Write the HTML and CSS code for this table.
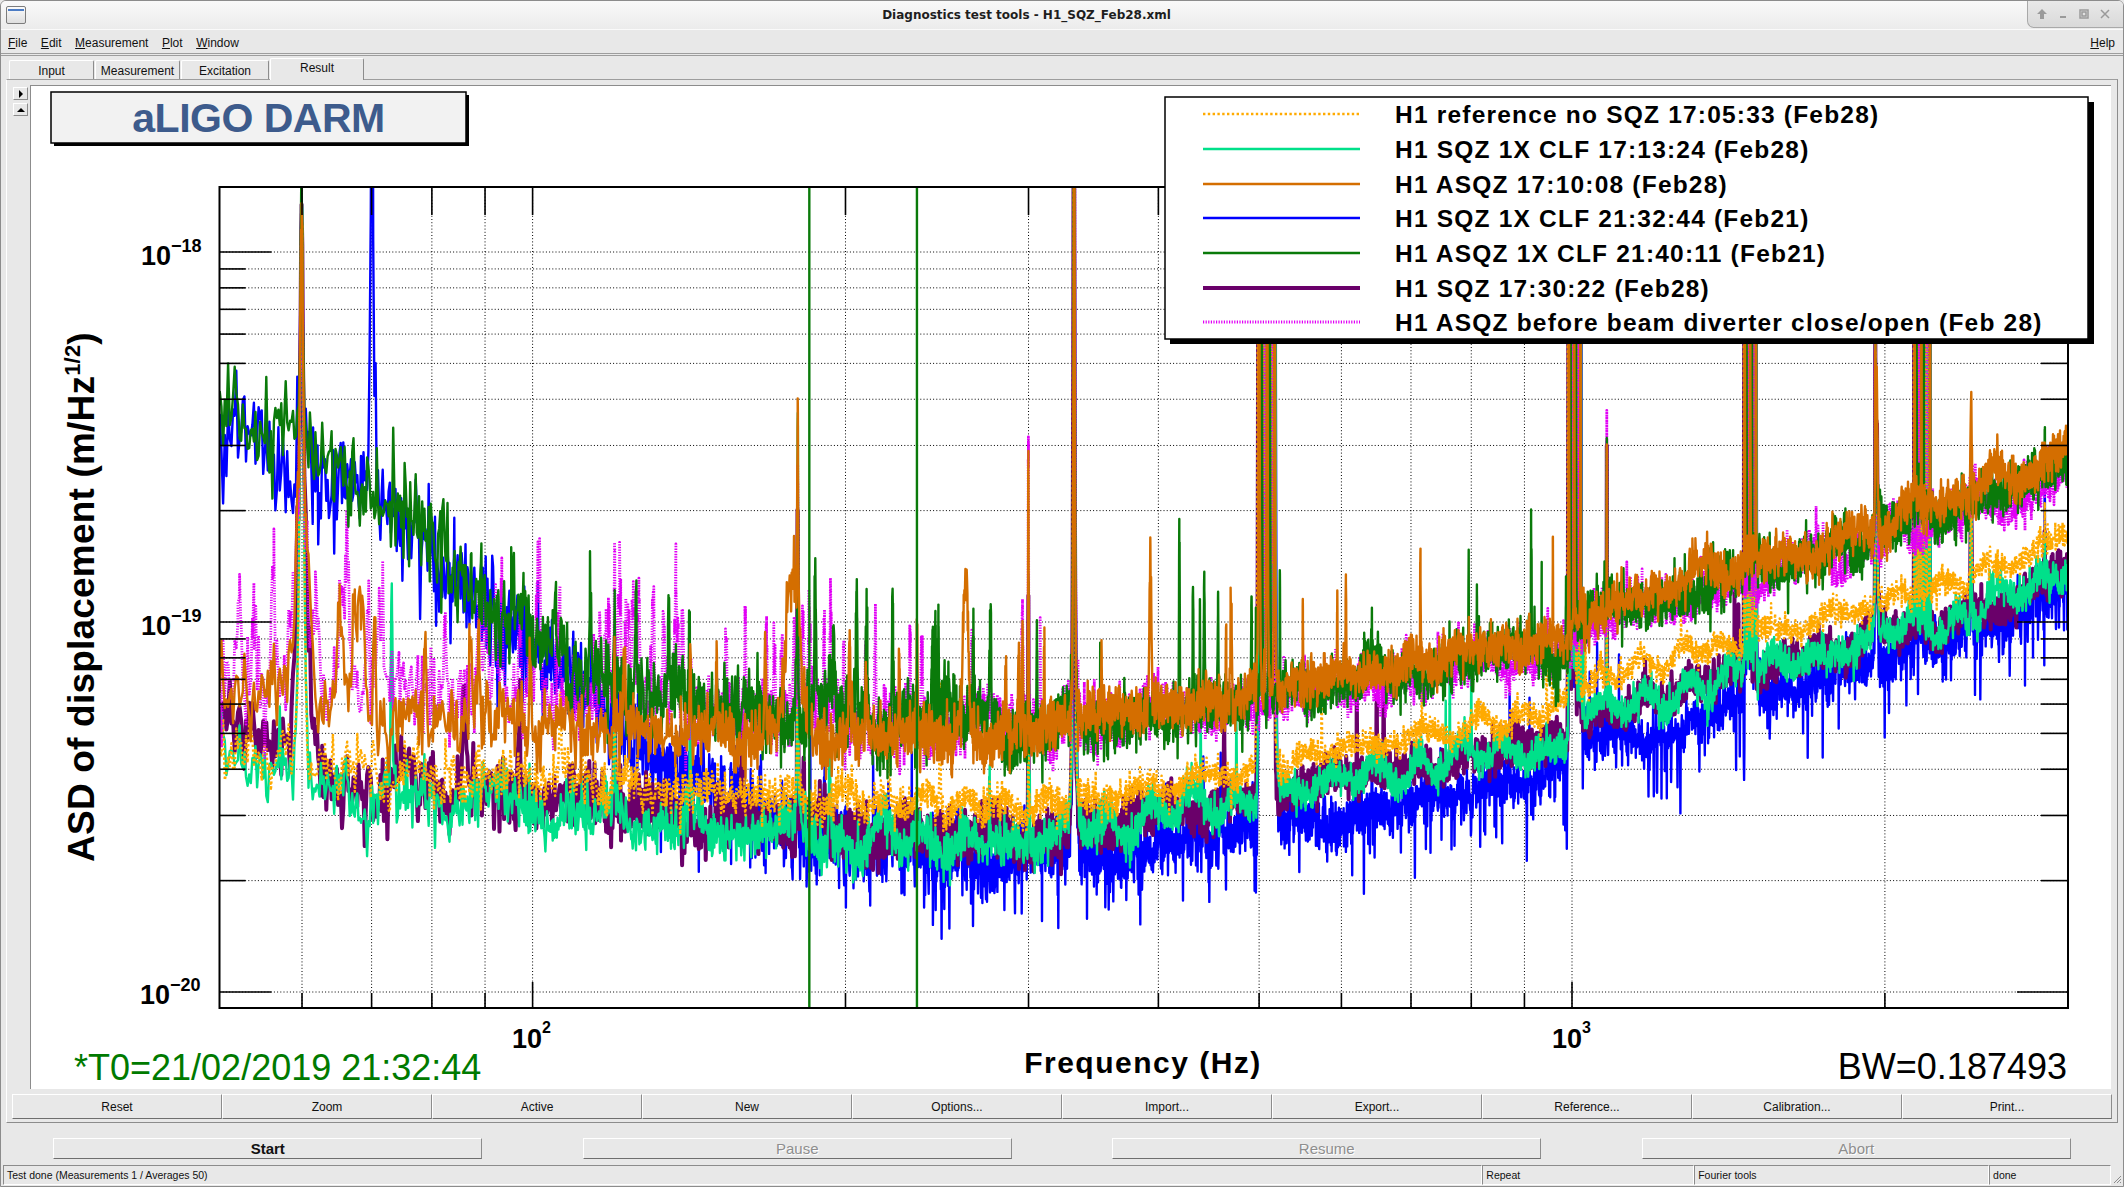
FILE: index.html
```html
<!DOCTYPE html>
<html>
<head>
<meta charset="utf-8">
<title>Diagnostics test tools - H1_SQZ_Feb28.xml</title>
<link rel="stylesheet" href="styles.css">
</head>
<body>
<div class="window">
  <div class="titlebar">
    <div class="winicon"><span class="winicon-stripe"></span></div>
    <div class="title">Diagnostics test tools - H1_SQZ_Feb28.xml</div>
    <div class="winctl">
      <svg width="12" height="12" viewBox="0 0 12 12"><polygon class="wc-fill" points="6,1 11,6 8,6 8,11 4,11 4,6 1,6"/></svg>
      <svg width="12" height="12" viewBox="0 0 12 12"><rect class="wc-fill" x="3" y="8" width="6" height="2"/></svg>
      <svg width="12" height="12" viewBox="0 0 12 12"><rect class="wc-line" x="2" y="2" width="8" height="8"/><rect class="wc-line" x="4" y="4" width="4" height="4"/></svg>
      <svg width="12" height="12" viewBox="0 0 12 12"><path class="wc-line" d="M2 2 L10 10 M10 2 L2 10"/></svg>
    </div>
  </div>
  <div class="menubar">
    <span class="menu"><u>F</u>ile</span>
    <span class="menu"><u>E</u>dit</span>
    <span class="menu"><u>M</u>easurement</span>
    <span class="menu"><u>P</u>lot</span>
    <span class="menu"><u>W</u>indow</span>
    <span class="spacer"></span>
    <span class="menu"><u>H</u>elp</span>
  </div>
  <div class="tabbar">
    <div class="tab tab-input">Input</div>
    <div class="tab tab-meas">Measurement</div>
    <div class="tab tab-exc">Excitation</div>
    <div class="tab tab-res">Result</div>
  </div>
  <div class="tabpanel">
    <div class="panel-row">
      <div class="side">
        <div class="arrowbtn"><svg width="6" height="8" viewBox="0 0 6 8"><polygon class="ab" points="1,0 5,4 1,8"/></svg></div>
        <div class="arrowbtn"><svg width="8" height="6" viewBox="0 0 8 6"><polygon class="ab" points="0,5 4,1 8,5"/></svg></div>
      </div>
      <div class="canvas">
        <svg class="plot" width="2080" height="1003" viewBox="31 86 2080 1003" xmlns="http://www.w3.org/2000/svg">
          <defs>
            <clipPath id="fclip"><rect x="219.5" y="187" width="1848.5" height="821"/></clipPath>
          </defs>
          <g id="grid" class="grid"></g>
          <g id="traces" clip-path="url(#fclip)"></g>
          <g id="axes" class="axes"></g>
          <rect class="frame" x="219.5" y="187" width="1848.5" height="821"/>

          <rect class="shadow" x="54" y="95" width="415" height="51"/>
          <rect class="titlebox" x="51" y="92" width="415" height="51"/>
          <text class="ptitle" x="258.5" y="132" text-anchor="middle">aLIGO DARM</text>

          <text class="tick" x="141" y="265">10<tspan class="exp" dy="-13">−18</tspan></text>
          <text class="tick" x="141" y="635">10<tspan class="exp" dy="-13">−19</tspan></text>
          <text class="tick" x="140" y="1004">10<tspan class="exp" dy="-13">−20</tspan></text>
          <text class="tick" x="512" y="1048">10<tspan class="exp2" dy="-15">2</tspan></text>
          <text class="tick" x="1552" y="1048">10<tspan class="exp2" dy="-15">3</tspan></text>

          <text class="xtitle" x="1143" y="1073" text-anchor="middle">Frequency (Hz)</text>
          <text class="ytitle" transform="translate(94 597) rotate(-90)" text-anchor="middle">ASD of displacement (m/Hz<tspan class="ysup" dy="-14">1/2</tspan><tspan dy="14">)</tspan></text>
          <text class="t0" x="74" y="1080">*T0=21/02/2019 21:32:44</text>
          <text class="bw" x="2067" y="1079" text-anchor="end">BW=0.187493</text>

          <rect class="shadow" x="1170" y="102" width="924" height="242"/>
          <rect class="legbox" x="1165" y="97" width="923" height="242"/>
          <line class="tr tr-yellow" x1="1203" x2="1360" y1="114" y2="114"/>
          <text class="legtext" x="1395" y="122.5">H1 reference no SQZ 17:05:33 (Feb28)</text>
          <line class="tr tr-teal" x1="1203" x2="1360" y1="149" y2="149"/>
          <text class="legtext" x="1395" y="157.5">H1 SQZ 1X CLF 17:13:24 (Feb28)</text>
          <line class="tr tr-orange" x1="1203" x2="1360" y1="184" y2="184"/>
          <text class="legtext" x="1395" y="192.5">H1 ASQZ 17:10:08 (Feb28)</text>
          <line class="tr tr-blue" x1="1203" x2="1360" y1="218" y2="218"/>
          <text class="legtext" x="1395" y="226.5">H1 SQZ 1X CLF 21:32:44 (Feb21)</text>
          <line class="tr tr-green" x1="1203" x2="1360" y1="253" y2="253"/>
          <text class="legtext" x="1395" y="261.5">H1 ASQZ 1X CLF 21:40:11 (Feb21)</text>
          <line class="tr tr-purple" x1="1203" x2="1360" y1="288" y2="288"/>
          <text class="legtext" x="1395" y="296.5">H1 SQZ 17:30:22 (Feb28)</text>
          <line class="tr tr-magenta" x1="1203" x2="1360" y1="322" y2="322"/>
          <text class="legtext" x="1395" y="330.5">H1 ASQZ before beam diverter close/open (Feb 28)</text>
        </svg>
      </div>
    </div>
    <div class="btnrow">
      <div class="btn">Reset</div>
      <div class="btn">Zoom</div>
      <div class="btn">Active</div>
      <div class="btn">New</div>
      <div class="btn">Options...</div>
      <div class="btn">Import...</div>
      <div class="btn">Export...</div>
      <div class="btn">Reference...</div>
      <div class="btn">Calibration...</div>
      <div class="btn">Print...</div>
    </div>
  </div>
  <div class="ctrlrow">
    <div class="cbtn start">Start</div>
    <div class="cbtn off">Pause</div>
    <div class="cbtn off">Resume</div>
    <div class="cbtn off">Abort</div>
  </div>
  <div class="statusbar">
    <div class="sf sf1">Test done (Measurements 1 / Averages 50)</div>
    <div class="sf sf2">Repeat</div>
    <div class="sf sf3">Fourier tools</div>
    <div class="sf sf4">done</div>
    <div class="grip"><svg width="11" height="11" viewBox="0 0 11 11"><path class="gr" d="M10 3 L3 10 M10 6 L6 10 M10 9 L9 10"/></svg></div>
  </div>
</div>
<script src="script.js"></script>
</body>
</html>
```

FILE: styles.css
```css
* { box-sizing: border-box; }
html, body { margin: 0; padding: 0; }
body {
  width: 2124px; height: 1187px; overflow: hidden;
  background: #e8e8e8;
  font-family: "Liberation Sans", Arial, sans-serif;
  color: #111;
}
.window {
  width: 2124px; height: 1187px;
  display: flex; flex-direction: column;
  border: 1px solid #8c8c8c;
  border-radius: 6px 6px 0 0;
  background: #e8e8e8;
  overflow: hidden;
}

/* title bar */
.titlebar {
  flex: none; height: 29px;
  display: flex; align-items: flex-start;
  background: linear-gradient(#f9f9f9, #ebebeb);
  border-bottom: 1px solid #fafafa;
}
.winicon {
  flex: none; width: 20px; height: 18px;
  margin: 5px 0 0 5px;
  border: 1px solid #7c7c7c; border-radius: 2px;
  background: linear-gradient(#fbfbfb, #dedede);
  padding: 2px 1px 0;
}
.winicon-stripe { display: block; height: 2px; background: #4c7cc4; }
.title {
  flex: 1; text-align: center;
  font: bold 12px "DejaVu Sans", sans-serif;
  color: #1e1e1e; line-height: 29px;
}
.winctl {
  flex: none; width: 96px; height: 27px;
  display: flex; align-items: center; gap: 9px;
  padding-left: 8px;
  background: linear-gradient(#e9e9e9, #d9d9d9);
  border-left: 1px solid #a9a9a9; border-bottom: 1px solid #a9a9a9;
  border-bottom-left-radius: 7px;
}
.winctl svg { display: block; }
.wc-fill { fill: #9a9a9a; }
.wc-line { fill: none; stroke: #9a9a9a; stroke-width: 1.5; }

/* menu */
.menubar {
  flex: none; height: 24px;
  display: flex; align-items: center;
  padding: 2px 8px 0 7px;
  font-size: 12px;
  border-bottom: 1px solid #9d9d9d;
}
.menu { margin-right: 13.5px; }
.menu:last-child { margin-right: 0; }
.menu u { text-decoration: underline; text-underline-offset: 1px; }
.spacer { flex: 1; }

/* tabs */
.tabbar {
  flex: none; height: 24px; margin-top: 1px;
  border-top: 1px solid #9d9d9d;
  display: flex; align-items: flex-end;
  padding-left: 8px;
}
.tab {
  height: 19px; margin-right: 1px;
  display: flex; align-items: center; justify-content: center;
  padding-top: 2px;
  font-size: 12px;
  background: #e8e8e8;
  border-top: 1px solid #fff; border-left: 1px solid #fff;
  border-right: 1px solid #8c8c8c;
  border-radius: 2px 2px 0 0;
}
.tab-input { width: 85px; }
.tab-meas { width: 85px; }
.tab-exc { width: 88px; }
.tab-res {
  width: 94px; height: 22px; margin-bottom: -1px;
  position: relative; padding-top: 0; padding-bottom: 3px;
}

/* tab panel */
.tabpanel {
  flex: none; height: 1044px;
  margin: 0 5px;
  border-top: 1px solid #9d9d9d;
  border-left: 1px solid #fff;
  border-right: 1px solid #8c8c8c;
  border-bottom: 1px solid #8c8c8c;
  display: flex; flex-direction: column;
}
.panel-row { display: flex; padding-top: 5px; }
.side {
  width: 23px; flex: none;
  padding: 2px 0 0 6px;
  display: flex; flex-direction: column; gap: 3px;
}
.arrowbtn {
  width: 15px; height: 13px;
  border: 1px solid; border-color: #fff #8c8c8c #8c8c8c #fff;
  background: #e8e8e8;
  display: flex; align-items: center; justify-content: center;
}
.arrowbtn svg { display: block; }
.ab { fill: #000; }
.canvas {
  flex: none; width: 2081px; height: 1004px;
  border-top: 1px solid #8c8c8c; border-left: 1px solid #8c8c8c;
  background: #fff;
}
.canvas svg { display: block; }
.btnrow { display: flex; margin: 5px 0 0 5px; height: 25px; }
.btn {
  width: 210px; flex: none;
  display: flex; align-items: center; justify-content: center;
  font-size: 12px;
  background: #e8e8e8;
  border: 1px solid; border-color: #fff #8c8c8c #6e6e6e #fff;
}

/* control buttons */
.ctrlrow {
  flex: none; height: 41px;
  display: grid; grid-template-columns: repeat(4, 1fr);
  padding: 15px 2px 5px;
}
.cbtn {
  justify-self: center; width: 429px; height: 21px;
  display: flex; align-items: center; justify-content: center;
  font-size: 15px;
  background: #e8e8e8;
  border: 1px solid; border-color: #fff #8c8c8c #6e6e6e #fff;
}
.cbtn.start { font-weight: bold; color: #111; }
.cbtn.off { color: #8e8e8e; text-shadow: 1px 1px 0 #fff; }

/* status bar */
.statusbar {
  flex: none; height: 22px;
  display: flex; padding: 1px 0 1px 2px;
  font-size: 10.5px;
}
.sf {
  height: 20px; display: flex; align-items: center;
  padding-left: 3px;
  border: 1px solid; border-color: #8c8c8c #fff #fff #8c8c8c;
  white-space: nowrap;
}
.sf1 { width: 1480px; }
.sf2 { width: 212px; }
.sf3 { width: 295px; }
.sf4 { width: 122px; }
.grip { flex: 1; display: flex; align-items: flex-end; justify-content: flex-end; padding: 0 1px 1px 0; }
.grip svg { display: block; }
.gr { fill: none; stroke: #8c8c8c; stroke-width: 1; }

/* plot */
.grid line { stroke: #000; stroke-width: 1; stroke-dasharray: 1 2.2; }
.axes line { stroke: #000; stroke-width: 1.6; }
.frame { fill: none; stroke: #000; stroke-width: 2; }
.shadow { fill: #000; }
.titlebox { fill: #f2f2f2; stroke: #000; stroke-width: 1.5; }
.legbox { fill: #fff; stroke: #000; stroke-width: 1.5; }
.ptitle { font: bold 41px "Liberation Sans", Arial, sans-serif; fill: #3d5b8c; letter-spacing: -0.5px; }
.tick { font: bold 27px "Liberation Sans", Arial, sans-serif; fill: #000; }
.exp { font-size: 18px; }
.exp2 { font-size: 16px; }
.xtitle { font: bold 30px "Liberation Sans", Arial, sans-serif; fill: #000; letter-spacing: 1.5px; }
.ytitle { font: bold 37px "Liberation Sans", Arial, sans-serif; fill: #000; letter-spacing: 0.2px; }
.ysup { font-size: 22px; }
.t0 { font: 36px "Liberation Sans", Arial, sans-serif; fill: #007a00; }
.bw { font: 36px "Liberation Sans", Arial, sans-serif; fill: #000; }
.legtext { font: bold 24.5px "Liberation Sans", Arial, sans-serif; fill: #000; letter-spacing: 1.2px; }

.tr { fill: none; stroke-linejoin: round; }
.tr-blue { stroke: #0000ff; stroke-width: 2.4; }
.tr-purple { stroke: #6a006a; stroke-width: 4; }
.tr-teal { stroke: #00e08a; stroke-width: 2.4; }
.tr-yellow { stroke: #ffaa00; stroke-width: 2.4; stroke-dasharray: 2.4 2.4; }
.tr-green { stroke: #0a7a0a; stroke-width: 2.4; }
.tr-orange { stroke: #d46e00; stroke-width: 2.4; }
.tr-magenta { stroke: #e100f5; stroke-width: 2.8; stroke-dasharray: 1.2 1.4; }
```

FILE: script.js
```js
(function () {
  var NS = 'http://www.w3.org/2000/svg';
  var X0 = 219.5, X1 = 2068, Y0 = 187, Y1 = 1008;
  function lg(v) { return Math.log(v) / Math.LN10; }
  function fx(f) { return 532.6 + 1039.4 * lg(f / 100); }
  function ly(L) { return 252 + 370 * (-18 - L); }
  function el(tag, attrs, parent) {
    var e = document.createElementNS(NS, tag);
    for (var k in attrs) e.setAttribute(k, attrs[k]);
    parent.appendChild(e);
    return e;
  }
  var grid = document.getElementById('grid');
  var axes = document.getElementById('axes');
  var layer = document.getElementById('traces');

  [-20, -19, -18].forEach(function (d) {
    for (var m = 1; m <= 9; m++) {
      var y = ly(d + lg(m));
      if (y < Y0 + 1 || y > Y1 - 1) continue;
      var major = m === 1;
      el('line', { x1: X0, x2: X1, y1: y, y2: y }, grid);
      el('line', { x1: X0, x2: X0 + (major ? 52 : 26), y1: y, y2: y }, axes);
      el('line', { x1: X1, x2: X1 - (major ? 51 : 27), y1: y, y2: y }, axes);
    }
  });
  [60, 70, 80, 90, 100, 200, 300, 400, 500, 600, 700, 800, 900, 1000, 2000].forEach(function (f) {
    var x = fx(f), major = (f === 100 || f === 1000);
    el('line', { x1: x, x2: x, y1: Y0, y2: Y1 }, grid);
    el('line', { x1: x, x2: x, y1: Y1, y2: Y1 - (major ? 26 : 15) }, axes);
    el('line', { x1: x, x2: x, y1: Y0, y2: Y0 + 28 }, axes);
  });

  var seed = 20190228;
  function rnd() { seed = (Math.imul(seed, 1664525) + 1013904223) >>> 0; return seed / 4294967296; }
  function gauss() {
    var u = rnd(); if (u < 1e-9) u = 1e-9;
    var v = rnd();
    return Math.sqrt(-2 * Math.log(u)) * Math.cos(6.283185307 * v);
  }
  function interp(pts, f) {
    if (f <= pts[0][0]) return pts[0][1];
    var lf = lg(f);
    for (var i = 1; i < pts.length; i++) {
      if (f <= pts[i][0]) {
        var a = lg(pts[i - 1][0]), b = lg(pts[i][0]);
        return pts[i - 1][1] + (lf - a) / (b - a) * (pts[i][1] - pts[i - 1][1]);
      }
    }
    return pts[pts.length - 1][1];
  }
  function cluster(fs, h, w, off, pick) {
    var out = [];
    fs.forEach(function (f, i) { if (pick < 0 || i % 3 === pick) out.push([f + off, h, w]); });
    return out;
  }

  function commonLines(off, pick) {
    return [
      [59.95, -17.93, 0.12], [119.9, -19.12, 0.12], [179.9, -18.68, 0.12], [299.9, -18.95, 0.12],
      [331.9 + off * 0.3, -17.3, 0.15], [1080.2, -18.55, 0.2], [2850, -18.95, 0.8], [1963, -18.5, 3.5],
      [1958, -18.3, 0.4], [2421, -18.75, 3]
    ]
      .concat(cluster([500, 503, 506, 509, 512, 515, 517.5], -17.2, 0.15, off, pick))
      .concat(cluster([993, 997, 1001, 1005, 1009, 1014, 1019], -17.2, 0.15, off * 1.5, pick))
      .concat(cluster([1466, 1472, 1478, 1484, 1490, 1497, 1503], -17.2, 0.2, off * 2, pick))
      .concat(cluster([2136, 2146, 2156, 2168, 2180, 2195, 2210], -17.2, 0.2, off * 2.5, pick));
  }

  var traces = [
    {
      cls: 'tr-blue', off: 0.9, pick: -1, slo: 0.08, shi: 0.035, down: 0.06,
      wall: [[50, -18.47], [60, -18.56], [70, -18.66], [90, -18.95], [110, -19.17], [134, -19.45], [164, -19.65], [200, -19.85], [300, -20.3], [3000, -21.5]],
      floor: [[50, -19.75], [200, -19.67], [300, -19.65], [515, -19.56], [700, -19.48], [999, -19.40], [1001, -19.34], [1270, -19.27], [1741, -19.15], [2340, -19.04], [3000, -18.88]],
      extra: [[70.1, -17.3, 0.1], [1958, -17.95, 0.35], [2850, -18.7, 0.8], [2421, -18.72, 2]],
      nrand: 15, rlo: 60, rhi: 2500, ramp: [0.05, 0.12]
    },
    {
      cls: 'tr-purple', off: -0.6, pick: -1, slo: 0.05, shi: 0.025,
      floor: [[50, -19.30], [58, -19.30], [62, -19.42], [80, -19.45], [100, -19.47], [150, -19.54], [230, -19.57], [300, -19.58], [515, -19.47], [700, -19.39], [999, -19.32], [1001, -19.26], [1270, -19.19], [1741, -19.08], [2340, -18.99], [3000, -18.87]],
      extra: [[59.95, -18.7, 0.6]],
      nrand: 10, rlo: 60, rhi: 1500, ramp: [0.05, 0.12]
    },
    {
      cls: 'tr-teal', off: 0.45, pick: -1, slo: 0.045, shi: 0.022,
      floor: [[50, -19.35], [58, -19.37], [62, -19.46], [100, -19.50], [150, -19.56], [230, -19.59], [300, -19.59], [380, -19.53], [515, -19.47], [697, -19.39], [999, -19.33], [1001, -19.26], [1270, -19.19], [1741, -19.08], [2340, -18.99], [3000, -18.86]],
      extra: [[73.2, -19.02, 0.12], [179.9, -18.63, 0.12]],
      nrand: 12, rlo: 60, rhi: 1500, ramp: [0.05, 0.12]
    },
    {
      cls: 'tr-yellow', off: -1.1, pick: -1, slo: 0.04, shi: 0.018,
      floor: [[50, -19.35], [58, -19.36], [62, -19.40], [100, -19.42], [150, -19.46], [230, -19.49], [300, -19.50], [380, -19.46], [515, -19.38], [810, -19.28], [999, -19.23], [1001, -19.17], [1270, -19.09], [1863, -18.97], [2420, -18.88], [3000, -18.77]],
      extra: [],
      nrand: 10, rlo: 60, rhi: 1500, ramp: [0.04, 0.1]
    },
    {
      cls: 'tr-magenta', off: 0.7, pick: 2, slo: 0.06, shi: 0.025, up: 0.1,
      floor: [[50, -19.17], [100, -19.21], [200, -19.27], [300, -19.29], [515, -19.22], [999, -19.09], [1001, -19.03], [1741, -18.84], [3000, -18.62]],
      extra: [[299.9, -18.6, 0.15], [119.9, -18.94, 0.12], [59.95, -18.7, 0.6]],
      nrand: 60, rlo: 50, rhi: 320, ramp: [0.06, 0.14]
    },
    {
      cls: 'tr-green', off: -0.3, pick: 1, slo: 0.07, shi: 0.035,
      wall: [[50, -18.40], [58, -18.48], [67, -18.60], [82, -18.86], [100, -19.12], [121, -19.33], [150, -19.5], [200, -19.75], [300, -20.2], [3000, -21.5]],
      floor: [[50, -19.32], [150, -19.30], [250, -19.27], [300, -19.30], [400, -19.26], [515, -19.20], [700, -19.13], [944, -19.07], [999, -19.06], [1001, -19.0], [1270, -18.92], [1741, -18.81], [2164, -18.72], [3000, -18.59]],
      extra: [[419, -18.77, 0.3], [187, -18.95, 0.3], [205, -19.0, 0.3], [222, -18.95, 0.3]],
      nrand: 35, rlo: 80, rhi: 1000, ramp: [0.08, 0.2]
    },
    {
      cls: 'tr-orange', off: 0, pick: 0, slo: 0.05, shi: 0.03,
      floor: [[50, -19.19], [60, -19.22], [70, -19.25], [100, -19.28], [150, -19.31], [230, -19.32], [300, -19.29], [400, -19.24], [515, -19.18], [700, -19.11], [944, -19.05], [999, -19.04], [1001, -18.98], [1270, -18.9], [1741, -18.79], [2164, -18.695], [3000, -18.55]],
      extra: [[59.95, -18.65, 0.7], [68.3, -19.06, 0.6], [178, -18.9, 2.5], [179.9, -18.52, 0.12], [261, -18.95, 1.5], [299.9, -18.6, 0.15], [393, -18.89, 0.8], [470, -18.98, 0.8], [606, -19.0, 0.5], [1963, -18.42, 4], [2421, -18.48, 3]],
      nrand: 25, rlo: 60, rhi: 1000, ramp: [0.06, 0.15]
    }
  ];

  traces.forEach(function (tr) {
    var lines = commonLines(tr.off, tr.pick).concat(tr.extra || []);
    for (var i = 0; i < (tr.nrand || 0); i++) {
      var rf = tr.rlo * Math.pow(tr.rhi / tr.rlo, rnd());
      lines.push([rf, interp(tr.floor, rf) + tr.ramp[0] + rnd() * tr.ramp[1], 0.15 + rnd() * 0.3]);
    }
    var amp = lines.map(function (l) { return Math.pow(10, 2 * l[1]); });
    var fs = [];
    for (var f = 50; f <= 3000; f += Math.max(0.1875, f * 2.302585 / (1039.4 * 3))) fs.push(f);
    lines.forEach(function (l) {
      if (l[2] < 1) fs.push(l[0], l[0] - l[2] * 0.7, l[0] + l[2] * 0.7);
    });
    fs.sort(function (a, b) { return a - b; });
    var waves = [];
    for (var k = 0; k < 6; k++) waves.push([0.005 + rnd() * 0.01, 3 + rnd() * 25, rnd() * 6.283]);
    var d = [];
    var first = true;
    for (var j = 0; j < fs.length; j++) {
      var fr = fs[j];
      if (fr < 50 || fr > 3000) continue;
      var P = Math.pow(10, 2 * interp(tr.floor, fr));
      if (tr.wall) P += Math.pow(10, 2 * interp(tr.wall, fr));
      for (var q = 0; q < lines.length; q++) {
        var x = (fr - lines[q][0]) / lines[q][2];
        if (x > 60 || x < -60) continue;
        var x2 = x * x;
        P += amp[q] / (1 + x2 * x2);
      }
      var L = 0.5 * lg(P);
      var lf = lg(fr);
      for (var w = 0; w < waves.length; w++) L += waves[w][0] * Math.sin(waves[w][1] * lf * 6.283 + waves[w][2]);
      var t = Math.min(1, Math.max(0, lg(fr / 60)));
      var s = tr.slo + (tr.shi - tr.slo) * t;
      var nz = gauss() * s;
      if (tr.down && rnd() < tr.down) nz -= rnd() * 0.2;
      if (tr.up && rnd() < tr.up) nz += rnd() * 0.1;
      L += nz;
      var y = ly(L);
      if (y < -100) y = -100;
      if (y > 1200) y = 1200;
      d.push((first ? 'M' : 'L') + fx(fr).toFixed(1) + ' ' + y.toFixed(1));
      first = false;
    }
    el('path', { d: d.join(''), 'class': 'tr ' + tr.cls }, layer);
  });

  [184.6, 234.3].forEach(function (f) {
    var x = fx(f);
    el('line', { x1: x, x2: x, y1: Y0, y2: Y1, 'class': 'tr tr-green' }, layer);
  });
})();
```
